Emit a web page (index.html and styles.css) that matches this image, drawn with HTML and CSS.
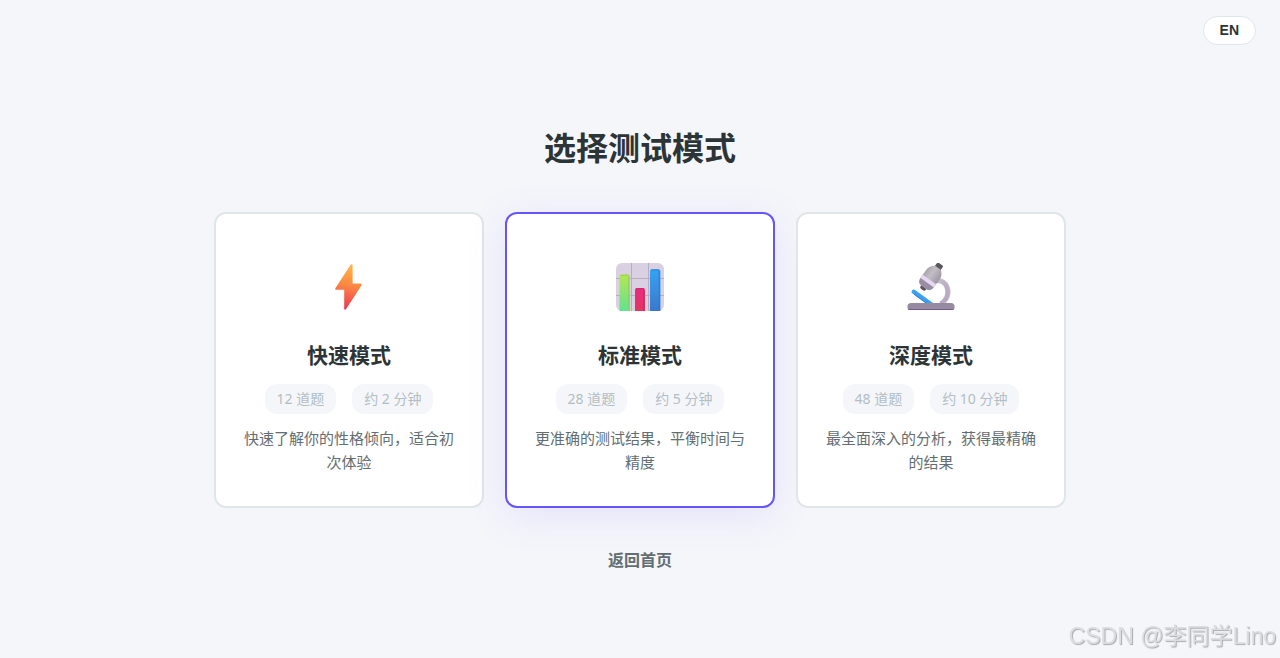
FILE: index.html
```html
<!DOCTYPE html>
<html lang="zh-CN">
<head>
    <meta charset="UTF-8">
    <meta name="viewport" content="width=device-width, initial-scale=1.0">
    <title>选择测试模式</title>
    <link rel="stylesheet" href="styles.css">
</head>
<body>

    <header class="topbar">
        <button type="button" class="lang-btn">EN</button>
    </header>

    <main class="container">
        <h1 class="title">选择测试模式</h1>

        <div class="modes">
            <button type="button" class="mode-card">
                <svg class="mode-icon" viewBox="0 0 48 48" aria-hidden="true">
                    <defs>
                        <linearGradient id="bolt" x1="0.55" y1="0" x2="0.45" y2="1">
                            <stop offset="0" stop-color="#ffb647"/>
                            <stop offset="0.45" stop-color="#fb8a42"/>
                            <stop offset="1" stop-color="#ee3454"/>
                        </linearGradient>
                    </defs>
                    <path d="M25.8 1.6 L10.2 25.4 Q9.8 26.8 11 26.8 H19.2 V46 Q19.8 47.4 21 46.2 L36.6 22.2 Q37 20.6 35.8 20.6 H27.6 V2 Q27 .6 25.8 1.6Z" fill="url(#bolt)"/>
                </svg>
                <h2 class="mode-name">快速模式</h2>
                <span class="mode-meta"><span>12 道题</span><span>约 2 分钟</span></span>
                <span class="mode-desc">快速了解你的性格倾向，适合初次体验</span>
            </button>

            <button type="button" class="mode-card active">
                <svg class="mode-icon" viewBox="0 0 48 48" aria-hidden="true">
                    <defs>
                        <linearGradient id="barGreen" x1="0" y1="0" x2="0" y2="1">
                            <stop offset="0" stop-color="#b5e652"/>
                            <stop offset="1" stop-color="#61e390"/>
                        </linearGradient>
                        <linearGradient id="barRed" x1="0" y1="0" x2="0" y2="1">
                            <stop offset="0" stop-color="#e62d80"/>
                            <stop offset="1" stop-color="#e33560"/>
                        </linearGradient>
                        <linearGradient id="barBlue" x1="0" y1="0" x2="0" y2="1">
                            <stop offset="0" stop-color="#35a3f5"/>
                            <stop offset="1" stop-color="#3b78cc"/>
                        </linearGradient>
                    </defs>
                    <rect x="0" y="0" width="48" height="48" rx="6" fill="#d9d1e1"/>
                    <path d="M0 15.5H48M0 32.5H48M15.5 0V48M32.5 0V48" stroke="#b8aec2" fill="none"/>
                    <path d="M3.5 48V13.5Q3.5 11.5 5.5 11.5H12Q14 11.5 14 13.5V48Z" fill="url(#barGreen)"/>
                    <path d="M12.8 13V48M4.5 12.2H13" stroke="#8fc450" stroke-opacity="0.7" fill="none"/>
                    <path d="M19 48V27Q19 25 21 25H27Q29 25 29 27V48Z" fill="url(#barRed)"/>
                    <path d="M28 27V48M20 25.8H28" stroke="#bd2857" stroke-opacity="0.7" fill="none"/>
                    <path d="M34 48V8.2Q34 6.2 36 6.2H42.4Q44.4 6.2 44.4 8.2V48Z" fill="url(#barBlue)"/>
                    <path d="M43.2 8V48M35 7H43" stroke="#2875c4" stroke-opacity="0.8" fill="none"/>
                </svg>
                <h2 class="mode-name">标准模式</h2>
                <span class="mode-meta"><span>28 道题</span><span>约 5 分钟</span></span>
                <span class="mode-desc">更准确的测试结果，平衡时间与精度</span>
            </button>

            <button type="button" class="mode-card">
                <svg class="mode-icon" viewBox="0 0 48 48" aria-hidden="true">
                    <defs>
                        <linearGradient id="tube" x1="0" y1="0" x2="1" y2="0">
                            <stop offset="0" stop-color="#aaa3ad"/>
                            <stop offset="0.4" stop-color="#c3bec5"/>
                            <stop offset="1" stop-color="#9f96a6"/>
                        </linearGradient>
                        <linearGradient id="arm" x1="0" y1="0" x2="1" y2="1">
                            <stop offset="0" stop-color="#c3bbc9"/>
                            <stop offset="1" stop-color="#b3a5bf"/>
                        </linearGradient>
                    </defs>
                    <path d="M30 17.5C43.5 18 44 35.5 33.5 41" stroke="url(#arm)" stroke-width="5" fill="none"/>
                    <path d="M33 15.8C45.4 19 45.6 35 37 40.5" stroke="#c8bcd2" fill="none"/>
                    <path d="M6.8 28.8L25 42" stroke="#3c9ff0" stroke-width="4.5" stroke-linecap="round"/>
                    <path d="M7 31.2L22 42" stroke="#287fd5"/>
                    <g transform="rotate(36 24 14.3)">
                        <rect x="20.5" y="-2" width="7" height="6.5" rx="1.5" fill="#5b565e"/>
                        <rect x="20.8" y="24.5" width="6.4" height="5" rx="2" fill="#5b5262"/>
                        <path d="M20.5 2.5H27.5Q32.2 5.5 32.2 11V20Q32 26.5 27.5 26.5H20.5Q16 26.5 15.8 20V11Q15.8 5.5 20.5 2.5Z" fill="url(#tube)"/>
                        <path d="M15.8 17H32.2V21H15.8Z" fill="#e6d6f1"/>
                        <path d="M15.9 21H32.1Q31.5 26.5 27.5 26.5H20.5Q16.5 26.5 15.9 21Z" fill="#998da4"/>
                    </g>
                    <path d="M0.5 45V43.5Q0.5 40 4 40H44Q47.5 40 47.5 43.5V45Q47.5 47 45.5 47H2.5Q0.5 47 0.5 45Z" fill="#968aa1"/>
                    <path d="M1.5 46.5H46.5" stroke="#755d89"/>
                </svg>
                <h2 class="mode-name">深度模式</h2>
                <span class="mode-meta"><span>48 道题</span><span>约 10 分钟</span></span>
                <span class="mode-desc">最全面深入的分析，获得最精确的结果</span>
            </button>
        </div>

        <a href="#" class="back-link">返回首页</a>
    </main>

    <div class="watermark">CSDN @李同学Lino</div>

</body>
</html>
```
FILE: styles.css
```css
* {
    margin: 0;
    padding: 0;
    box-sizing: border-box;
}
body {
    min-height: 100vh;
    background-color: #f5f6fa;
    color: #2d3436;
    font-family: "Noto Sans", "Noto Sans CJK SC", sans-serif;
}
button {
    font-family: inherit;
    color: inherit;
    cursor: pointer;
}
.topbar {
    display: flex;
    justify-content: flex-end;
    padding: 16px 24px 0;
}
.lang-btn {
    padding: 6px 16px;
    border: 1px solid #dfe6e9;
    border-radius: 20px;
    background-color: #fff;
    font-family: "Liberation Sans", sans-serif;
    font-size: 14px;
    line-height: 15px;
    font-weight: bold;
}
.container {
    max-width: 900px;
    margin: 0 auto;
    padding: 79px 24px 40px;
    text-align: center;
}
.title {
    margin-bottom: 40px;
    font-size: 32px;
    line-height: 48px;
    font-weight: bold;
}
.modes {
    display: grid;
    grid-template-columns: repeat(3, 1fr);
    gap: 21px;
    margin-bottom: 40px;
}
.mode-card {
    display: flex;
    flex-direction: column;
    align-items: center;
    padding: 32px 24px;
    border: 2px solid #dfe6e9;
    border-radius: 12px;
    background-color: #fff;
}
.mode-card.active {
    border-color: #6655ff;
    box-shadow: 0 8px 40px rgba(108, 92, 255, 0.12);
}
.mode-icon {
    width: 48px;
    height: 48px;
    margin: 17px 0 28px;
}
.mode-name {
    margin-bottom: 13px;
    font-size: 21px;
    line-height: 32px;
    font-weight: bold;
}
.mode-meta {
    display: flex;
    gap: 16px;
    margin-bottom: 12px;
    color: #b2bec3;
    font-size: 14px;
    line-height: 22px;
}
.mode-meta > span {
    padding: 4px 12px;
    border-radius: 12px;
    background-color: #f5f6fa;
}
.mode-desc {
    color: #636e72;
    font-size: 15px;
    line-height: 24px;
}
.back-link {
    display: inline-block;
    color: #636e72;
    font-size: 16px;
    line-height: 24px;
    font-weight: bold;
    text-decoration: none;
}
.watermark {
    position: fixed;
    right: 4px;
    bottom: 6px;
    color: #dcdde0;
    font-family: "Liberation Sans", "Noto Sans CJK SC", sans-serif;
    font-size: 23px;
    line-height: 32px;
    text-shadow: 1px 1px 1px #aaa;
}

@media (max-width: 720px) {
    .modes {
        grid-template-columns: 1fr;
    }
}
```
